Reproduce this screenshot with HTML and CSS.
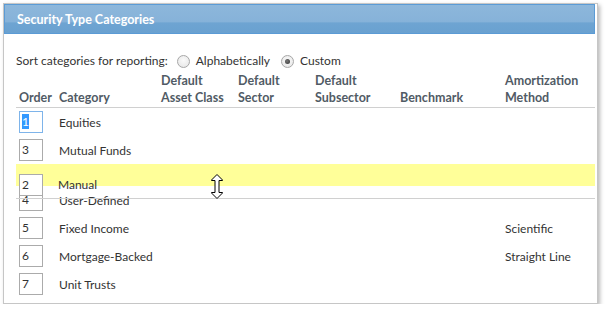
FILE: index.html
```html
<!DOCTYPE html>
<html>
<head>
<meta charset="utf-8">
<link rel="stylesheet" href="styles.css">
</head>
<body>
<div class="frame">
  <div class="titlebar">Security Type Categories</div>
  <div class="content">
    <div class="sort">
      <span class="sort-label">Sort categories for reporting:</span>
      <span class="radio"></span><span class="opt">Alphabetically</span>
      <span class="radio checked"></span><span class="opt">Custom</span>
    </div>
    <div class="table">
      <div class="grid thead">
        <div>Order</div>
        <div>Category</div>
        <div>Default<br>Asset Class</div>
        <div>Default<br>Sector</div>
        <div>Default<br>Subsector</div>
        <div>Benchmark</div>
        <div>Amortization<br>Method</div>
      </div>
      <div class="grid row"><div><span class="box focus"><span class="sel">1</span></span></div><div>Equities</div><div></div><div></div><div></div><div></div><div></div></div>
      <div class="grid row"><div><span class="box">3</span></div><div>Mutual Funds</div><div></div><div></div><div></div><div></div><div></div></div>
      <div class="placeholder"></div>
      <div class="grid row"><div><span class="box">4</span></div><div>User-Defined</div><div></div><div></div><div></div><div></div><div></div></div>
      <div class="grid row"><div><span class="box">5</span></div><div>Fixed Income</div><div></div><div></div><div></div><div></div><div>Scientific</div></div>
      <div class="grid row"><div><span class="box">6</span></div><div>Mortgage-Backed</div><div></div><div></div><div></div><div></div><div>Straight Line</div></div>
      <div class="grid row"><div><span class="box">7</span></div><div>Unit Trusts</div><div></div><div></div><div></div><div></div><div></div></div>
      <div class="grid row helper"><div><span class="box">2</span></div><div class="shift">Manual</div><div></div><div></div><div></div><div></div><div></div></div>
      <svg class="cursor" width="12" height="25" viewBox="0 0 12 25"><path d="M6 0.5 L11.5 6 L11.5 6.5 L8 6.5 L8 18.5 L11.5 18.5 L11.5 19 L6 24.5 L0.5 19 L0.5 18.5 L4 18.5 L4 6.5 L0.5 6.5 L0.5 6 Z" fill="#fff" stroke="#000" stroke-width="1"/></svg>
    </div>
  </div>
</div>
</body>
</html>
```

FILE: styles.css
```css
html, body {
  margin: 0;
  padding: 0;
  background: #fff;
}
body {
  font-family: Lato, "Open Sans", sans-serif;
  font-size: 12px;
  color: #333;
}
.frame {
  margin: 3px 0 0 3px;
  width: 593px;
  border: 1px solid #c6c6c6;
  box-shadow: 2px 2px 4px rgba(0, 0, 0, 0.28);
  background: #fff;
}
.titlebar {
  margin-right: 2px;
  height: 26px;
  padding-top: 2px;
  border: 1px solid #5b9bd5;
  background: linear-gradient(to bottom, #8db7db 0%, #86b2d9 60%, #6ea4d2 64%, #6aa1d0 100%);
  color: #fff;
  font-weight: bold;
  font-size: 12.5px;
  line-height: 26px;
  padding-left: 12px;
  box-sizing: content-box;
}
.content {
  padding: 18px 2px 5px 12px;
}
.sort {
  display: flex;
  align-items: center;
  height: 18px;
  margin-bottom: 2px;
  line-height: 18px;
}
.radio {
  width: 11px;
  height: 11px;
  border-radius: 50%;
  border: 1px solid #a7a7a7;
  background: radial-gradient(circle at 50% 40%, #fafafa 0%, #e4e4e4 100%);
  margin: 0 6px 0 9px;
  position: relative;
  flex: none;
}
.radio + .opt + .radio {
  margin-left: 11px;
}
.radio.checked::after {
  content: "";
  position: absolute;
  left: 3px;
  top: 3px;
  width: 5px;
  height: 5px;
  border-radius: 50%;
  background: radial-gradient(circle at 40% 40%, #777 0%, #333 100%);
}
.table {
  position: relative;
}
.grid {
  display: grid;
  grid-template-columns: 40px 102px 77px 77px 85px 105px 1fr;
  padding-left: 3px;
}
.thead {
  color: #515b65;
  font-weight: bold;
  font-size: 12.5px;
  line-height: 17px;
  align-items: end;
  padding-bottom: 1px;
  border-bottom: 1px solid #d0d0d0;
}
.row {
  height: 28px;
  align-items: center;
}
.box {
  display: block;
  box-sizing: border-box;
  width: 24px;
  height: 22px;
  border: 1px solid #ababab;
  background: #fff;
  padding-left: 2px;
  line-height: 20px;
}
.box.focus {
  border-color: #7eb4ea;
}
.sel {
  background: #3399ff;
  color: #fff;
}
.placeholder {
  height: 22px;
  background: #ffff99;
}
.helper {
  position: absolute;
  left: 0;
  right: 0;
  top: 99px;
  height: 27px;
  border-bottom: 1px solid #d0d0d0;
}
.shift {
  margin-left: -1px;
}
.cursor {
  position: absolute;
  left: 195px;
  top: 102px;
}
```
